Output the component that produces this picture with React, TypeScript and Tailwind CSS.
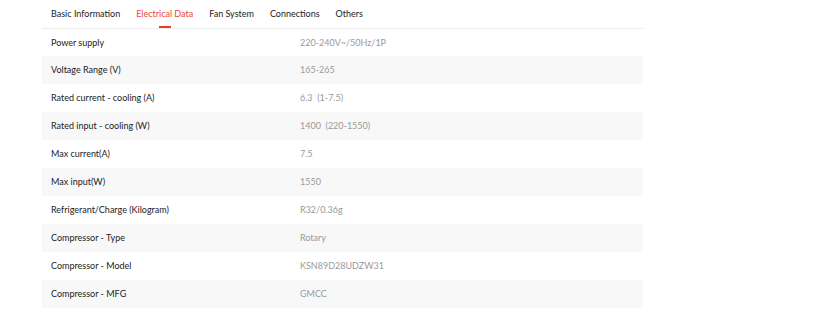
const tabs = ["Basic Information", "Electrical Data", "Fan System", "Connections", "Others"];

const rows: [string, string][] = [
  ["Power supply", "220-240V~/50Hz/1P"],
  ["Voltage Range (V)", "165-265"],
  ["Rated current - cooling (A)", "6.3  (1-7.5)"],
  ["Rated input - cooling (W)", "1400  (220-1550)"],
  ["Max current(A)", "7.5"],
  ["Max input(W)", "1550"],
  ["Refrigerant/Charge (Kilogram)", "R32/0.36g"],
  ["Compressor - Type", "Rotary"],
  ["Compressor - Model", "KSN89D28UDZW31"],
  ["Compressor - MFG", "GMCC"],
];

export default function App() {
  return (
    <div className="w-[829px] h-[318px] bg-white font-['Lato',sans-serif] text-[9px]">
      <div className="ml-[42px] w-[601px]">
        <div className="flex gap-4 pl-[9px] h-[29px] border-b border-[#ececec]">
          {tabs.map((t, i) => (
            <div key={t} className="relative flex items-center h-full">
              <span className={i === 1 ? "text-[#e8473a]" : "text-[#222]"}>{t}</span>
              {i === 1 && (
                <span className="absolute bottom-0 left-1/2 -translate-x-1/2 w-3 h-[2px] bg-[#e53c2e]" />
              )}
            </div>
          ))}
        </div>
        {rows.map(([k, v], i) => (
          <div
            key={k}
            className={"flex items-center " + (i === 0 ? "h-[27px] " : "h-[28px] ") + (i % 2 === 1 ? "bg-[#f8f8f8]" : "")}
          >
            <div className="w-[258px] pl-[9px] text-[#222]">{k}</div>
            <div className="text-[#9a9a9a] whitespace-pre">{v}</div>
          </div>
        ))}
      </div>
    </div>
  );
}
